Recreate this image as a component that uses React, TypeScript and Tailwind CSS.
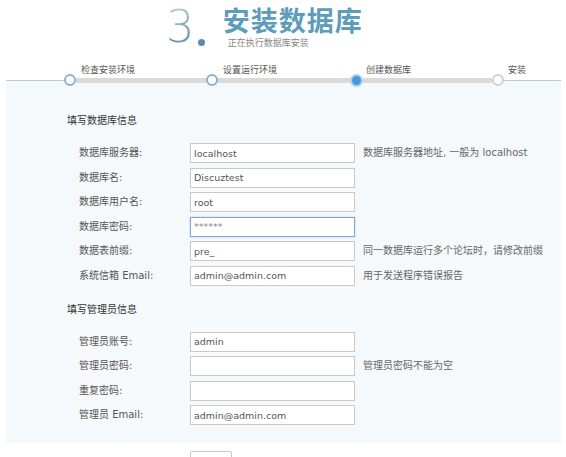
const font = 'font-["DejaVu_Sans","Noto_Sans_CJK_SC",sans-serif]';

type Field = { label: string; value: string; hint?: string; focus?: boolean };

const dbFields: Field[] = [
  { label: '数据库服务器:', value: 'localhost', hint: '数据库服务器地址, 一般为 localhost' },
  { label: '数据库名:', value: 'Discuztest' },
  { label: '数据库用户名:', value: 'root' },
  { label: '数据库密码:', value: '******', focus: true },
  { label: '数据表前缀:', value: 'pre_', hint: '同一数据库运行多个论坛时，请修改前缀' },
  { label: '系统信箱 Email:', value: 'admin@admin.com', hint: '用于发送程序错误报告' },
];

const adminFields: Field[] = [
  { label: '管理员账号:', value: 'admin' },
  { label: '管理员密码:', value: '', hint: '管理员密码不能为空' },
  { label: '重复密码:', value: '' },
  { label: '管理员 Email:', value: 'admin@admin.com' },
];

function Row({ f }: { f: Field }) {
  return (
    <div className="flex items-center h-[20px] pl-[73px]">
      <div className="w-[111px] text-[10px] text-[#555] leading-[14px]">{f.label}</div>
      <input
        readOnly
        value={f.value}
        className={
          f.focus
            ? 'w-[165px] h-[20px] border border-[#7ea6da] bg-white px-[3px] text-[9.5px] text-[#888] outline-none shadow-[0_0_2px_#b7cff0]'
            : 'w-[165px] h-[20px] border border-[#c9c9c9] bg-white px-[3px] text-[9.5px] text-[#555] outline-none'
        }
      />
      {f.hint && <div className="ml-[8px] text-[10px] text-[#666] leading-[14px] whitespace-nowrap">{f.hint}</div>}
    </div>
  );
}

function Circle({ kind }: { kind: 'done' | 'current' | 'todo' }) {
  if (kind === 'current')
    return <div className="w-[13px] h-[13px] rounded-full bg-[#4b9ad6] border-2 border-[#a8d0f0] shrink-0" />;
  if (kind === 'todo')
    return <div className="w-[12px] h-[12px] rounded-full bg-white border-2 border-[#d0d0d0] shrink-0" />;
  return <div className="w-[12px] h-[12px] rounded-full bg-white border-2 border-[#86b4d0] shrink-0" />;
}

export default function App() {
  return (
    <div className={`w-[566px] h-[457px] bg-white ${font}`}>
      {/* header */}
      <div className="h-[60px] flex items-start pl-[166px]">
        <span className='font-["DejaVu_Sans",sans-serif] font-extralight text-[45px] leading-[53px] bg-linear-to-b from-[#c3d4dc] to-[#4a84a2] bg-clip-text text-transparent'>
          3
        </span>
        <span className="w-[7px] h-[7px] rounded-full bg-[#5b8ea8] mt-[39px] ml-[3px]" />
        <div className="ml-[18px] flex flex-col">
          <span className='font-["Noto_Sans_CJK_SC",sans-serif] font-bold text-[27px] leading-[40px] text-[#5e9db9] tracking-[1px] whitespace-nowrap'>
            安装数据库
          </span>
          <span className="ml-[5px] -mt-[4px] text-[9px] leading-[14px] text-[#888] whitespace-nowrap">正在执行数据库安装</span>
        </div>
      </div>

      {/* step labels */}
      <div className="flex pl-[81px] h-[14px] mt-[3px] text-[9px] leading-[14px] text-[#555]">
        <div className="w-[142px]">检查安装环境</div>
        <div className="w-[143px]">设置运行环境</div>
        <div className="w-[142px]">创建数据库</div>
        <div>安装</div>
      </div>

      {/* step bar */}
      <div className="relative z-10 flex items-center h-[12px] -mt-[3px] pl-[64px] -mb-[6px]">
        <Circle kind="done" />
        <div className="w-[130px] h-[5px] bg-[#dadada]" />
        <Circle kind="done" />
        <div className="w-[132px] h-[5px] bg-[#dadada]" />
        <Circle kind="current" />
        <div className="w-[129px] h-[5px] bg-[#dadada]" />
        <Circle kind="todo" />
      </div>

      {/* panel */}
      <div className="mx-[6px] w-[555px] border-t border-[#b2cfe1] bg-[#f5f9fc] pt-[33px] pb-[18px]">
        <div className="pl-[61px] text-[10px] leading-[14px] text-[#333]">填写数据库信息</div>
        <div className="mt-[15px] flex flex-col gap-[4.5px]">
          {dbFields.map((f) => (
            <Row key={f.label} f={f} />
          ))}
        </div>
        <div className="mt-[17px] pl-[61px] text-[10px] leading-[14px] text-[#333]">填写管理员信息</div>
        <div className="mt-[15px] flex flex-col gap-[4.5px]">
          {adminFields.map((f) => (
            <Row key={f.label} f={f} />
          ))}
        </div>
      </div>

      <div className="pl-[190px] mt-[8px]">
        <div className="w-[42px] h-[20px] border border-[#c9c9c9] rounded-[2px] bg-white" />
      </div>
    </div>
  );
}
